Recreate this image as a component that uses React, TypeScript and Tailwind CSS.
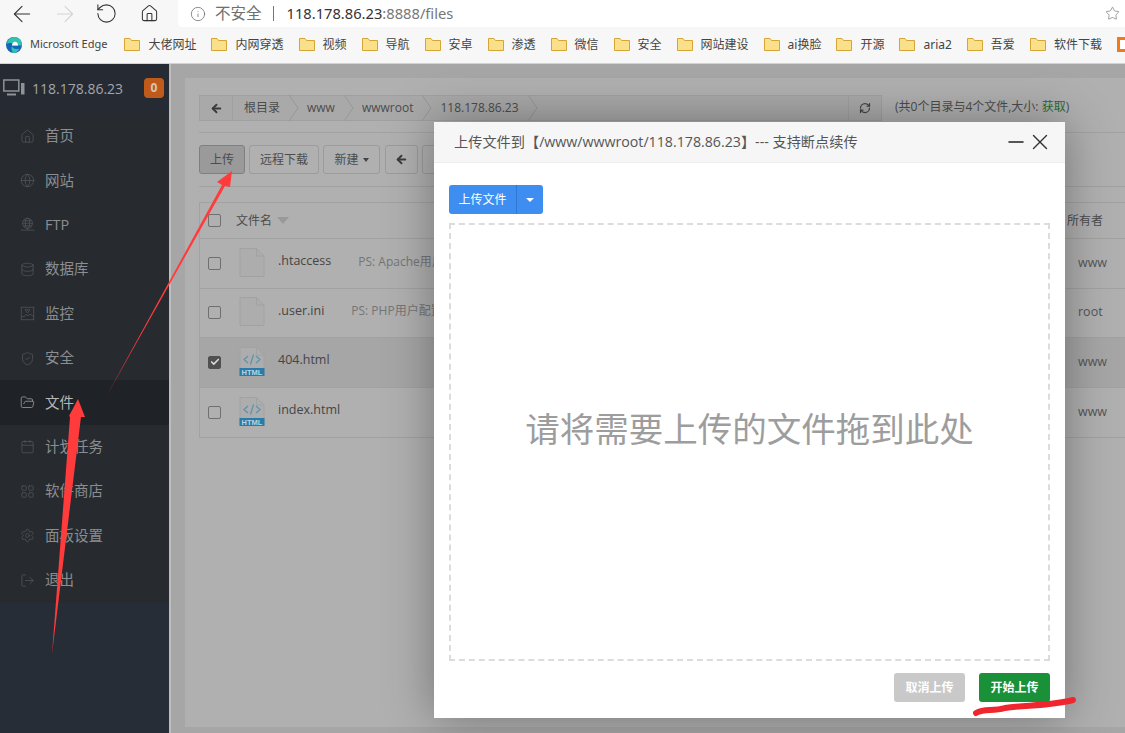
import { ArrowLeft, ArrowRight, Calendar, Check, Database, FolderOpen, Globe, Home, Info, LayoutGrid, LogOut, Minus, RefreshCw, RotateCw, Settings, ShieldCheck, Star, X } from "lucide-react";

function FtpIcon({ size, strokeWidth, className }: { size: number; strokeWidth: number; className: string }) {
  return (
    <svg width={size} height={size} viewBox="0 0 24 24" fill="none" stroke="currentColor" strokeWidth={strokeWidth} className={className}>
      <circle cx="12" cy="10" r="8" />
      <ellipse cx="12" cy="10" rx="3.500" ry="8" />
      <path d="M4 10h16M5 6h14M5 14h14M1 21h22M12 18v3" />
    </svg>
  );
}

function MonitorChartIcon({ size, strokeWidth, className }: { size: number; strokeWidth: number; className: string }) {
  return (
    <svg width={size} height={size} viewBox="0 0 24 24" fill="none" stroke="currentColor" strokeWidth={strokeWidth} className={className}>
      <rect x="2" y="2" width="20" height="20" />
      <path d="M2 17h5l3-4 3 3 3-3 6 4M8 6h8l-4 5z" />
    </svg>
  );
}

const BOOKMARKS = ["大佬网址", "内网穿透", "视频", "导航", "安卓", "渗透", "微信", "安全", "网站建设", "ai换脸", "开源", "aria2", "吾爱", "软件下载"];

const MENU = [
  { name: "首页", icon: Home },
  { name: "网站", icon: Globe },
  { name: "FTP", icon: FtpIcon },
  { name: "数据库", icon: Database },
  { name: "监控", icon: MonitorChartIcon },
  { name: "安全", icon: ShieldCheck },
  { name: "文件", icon: FolderOpen, active: true },
  { name: "计划任务", icon: Calendar },
  { name: "软件商店", icon: LayoutGrid },
  { name: "面板设置", icon: Settings },
  { name: "退出", icon: LogOut },
];

const CRUMBS = ["根目录", "www", "wwwroot", "118.178.86.23"];

const FILES = [
  { name: ".htaccess", ps: "PS: Apache用户配置", owner: "www" },
  { name: ".user.ini", ps: "PS: PHP用户配置文件", owner: "root" },
  { name: "404.html", html: true, checked: true, owner: "www" },
  { name: "index.html", html: true, owner: "www" },
];

function FolderIcon() {
  return (
    <svg width="16" height="13" viewBox="0 0 16 13" className="shrink-0">
      <path d="M.5 12.500V.5h5.500l1.500 2H15.500v10z" fill="#fbe08c" stroke="#d5a635" strokeWidth="1" />
    </svg>
  );
}

function EdgeLogo() {
  return (
    <svg width="16" height="16" viewBox="0 0 16 16" className="shrink-0">
      <circle cx="8" cy="8" r="8" fill="#1565b8" />
      <path d="M.5 7C1.500 3 4.500 0 8.500 0C13 0 16 3.500 16 8.500L6 8.500C6 11 9 13 13.500 11.500C12 14.500 9.500 16 7.500 16C5 14 4.500 9.500 8 6.500C5 5.500 2 6 .5 7Z" fill="#2fc3b0" />
      <path d="M6 8.500C6 6 7.500 4.800 9 4.800C10.800 4.800 12 6 12 8.500Z" fill="#fff" />
    </svg>
  );
}

function Chevron() {
  return (
    <svg width="11" height="26" viewBox="0 0 11 26" className="shrink-0">
      <path d="M1 0l9 13L1 26" fill="none" stroke="#979797" strokeWidth="1" />
    </svg>
  );
}

function FileIcon({ html }: { html?: boolean }) {
  return (
    <svg width="26" height="31" viewBox="0 0 26 31" className="shrink-0">
      <path d="M1 1.500h16.500L25 9v20.500H1z" fill="#adadad" stroke="#a2a2a2" strokeWidth="1" />
      <path d="M17.500 1.500V9H25" fill="none" stroke="#a2a2a2" strokeWidth="1" />
      {html && (
        <>
          <path d="M9 10l-4 3.500 4 3.500M17 10l4 3.500-4 3.500M14.500 8.500l-3 10" fill="none" stroke="#5f93ad" strokeWidth="1.300" />
          <rect x="0.500" y="22" width="25" height="8" fill="#2a7ba8" />
          <text x="13" y="29" textAnchor="middle" fontSize="7.500" fontWeight="700" fill="#b9d3e0" fontFamily="Liberation Sans, sans-serif">HTML</text>
        </>
      )}
    </svg>
  );
}

function Box({ checked }: { checked?: boolean }) {
  return (
    <span className={`w-[13px] h-[13px] rounded-[2px] border flex items-center justify-center shrink-0 ${checked ? "bg-[#505050] border-[#505050]" : "border-[#6f6f6f]"}`}>
      {checked && <Check size={10} strokeWidth={4} color="#d8d8d8" />}
    </span>
  );
}

export default function App() {
  return (
    <div className="w-[1125px] h-[733px] relative overflow-hidden flex flex-col bg-[#a6a6a6] font-['Open_Sans','Noto_Sans_CJK_SC',sans-serif]">
      {/* browser chrome */}
      <div className="h-[64px] bg-[#f7f7f7] border-b border-[#d2d2d2] shrink-0 flex flex-col">
        <div className="h-[27px] flex shrink-0">
          <div className="w-[178px] flex items-center text-[#333] shrink-0">
            <ArrowLeft size={26} strokeWidth={1} className="ml-[9px] shrink-0" />
            <ArrowRight size={26} strokeWidth={1} className="ml-[17px] text-[#d4d4d4] shrink-0" />
            <RotateCw size={23} strokeWidth={1.100} className="ml-[17px] -scale-x-100 shrink-0" />
            <Home size={19} strokeWidth={1.300} className="ml-[22px] shrink-0" />
          </div>
          <div className="flex-1 bg-white rounded-bl-[4px] flex items-center pl-[12px] font-['Noto_Sans','Noto_Sans_CJK_SC',sans-serif]">
            <Info size={16} strokeWidth={1.100} className="text-[#666]" />
            <span className="ml-[9px] text-[15.500px] text-[#6f6f6f]">不安全</span>
            <span className="ml-[11px] w-px h-[15px] bg-[#777]" />
            <span className="ml-[13px] text-[14.700px] text-[#333]">118.178.86.23<span className="text-[#777]">:8888/files</span></span>
            <Star size={15} strokeWidth={1} className="ml-auto mr-[5px] text-[#666]" />
          </div>
        </div>
        <div className="flex-1 flex items-center pl-[6px] pb-[1px] text-[12px] text-[#444] whitespace-nowrap font-['Noto_Sans','Noto_Sans_CJK_SC',sans-serif]">
          <EdgeLogo />
          <span className="ml-[8px] mr-[17px] text-[11px]">Microsoft Edge</span>
          <div className="flex items-center gap-[15px]">
            {BOOKMARKS.map((b) => (
              <div key={b} className="flex items-center gap-[8px]">
                <FolderIcon />
                <span>{b}</span>
              </div>
            ))}
            <span className="w-[16px] h-[15px] border-[3px] border-[#f07a1a] bg-white shrink-0" />
          </div>
        </div>
      </div>

      <div className="flex-1 flex min-h-0">
        {/* sidebar */}
        <aside className="w-[171px] shrink-0 bg-[#272d36] border-r-2 border-[#bdbdbd] flex flex-col">
          <div className="h-[50px] flex items-center pl-[3px] pb-[2px] bg-[#252a33]">
            <svg width="22" height="18" viewBox="0 0 22 18" fill="none" stroke="#8f9397" strokeWidth="1.500" className="shrink-0">
              <rect x=".8" y="1" width="15" height="11" />
              <path d="M4 15.500h9" strokeWidth="2" />
              <rect x="18" y="4" width="3.500" height="11.500" fill="#8f9397" stroke="none" />
            </svg>
            <span className="ml-[7px] text-[14px] text-[#a3a6a9]">118.178.86.23</span>
            <span className="ml-auto mr-[5px] w-[20px] h-[20px] rounded-[4px] bg-[#c05a1a] text-[#d8c4b4] text-[12px] font-bold flex items-center justify-center">0</span>
          </div>
          <nav className="bg-[#272b30] pb-[1px]">
            {MENU.map((m) => (
              <div key={m.name} className={`h-[44.400px] flex items-center pl-[20px] ${m.active ? "bg-[#1f2226]" : ""}`}>
                <m.icon size={15} strokeWidth={1.300} className={m.active ? "text-[#9a9da0]" : "text-[#4f5458]"} />
                <span className={`ml-[10px] text-[14.500px] ${m.active ? "text-[#b5b7b9]" : "text-[#8b8e91]"}`}>{m.name}</span>
              </div>
            ))}
          </nav>
        </aside>

        {/* main panel */}
        <main className="flex-1 min-w-0 pl-[14px] pt-[14px] pb-[6px]">
          <div className="h-full bg-[#b0b0b0] pl-[14px] text-[#4c4c4c] text-[12px]">
            <div className="h-[55px] border-b border-[#a2a2a2] flex items-start pt-[17px]">
              <div className="w-[650px] h-[26px] border border-[#a0a0a0] bg-[#a9a9a9] flex items-center shrink-0">
                <div className="w-[33px] h-full border-r border-[#a0a0a0] flex items-center justify-center mr-[3px]">
                  <ArrowLeft size={13} strokeWidth={3.500} className="text-[#3c3c3c]" />
                </div>
                {CRUMBS.map((c) => (
                  <div key={c} className="flex items-center h-full">
                    <span className="mx-[8px]">{c}</span>
                    <Chevron />
                  </div>
                ))}
              </div>
              <div className="w-[33px] h-[26px] border border-l-0 border-[#a0a0a0] bg-[#aaaaaa] flex items-center justify-center shrink-0">
                <RefreshCw size={12} strokeWidth={2.500} className="text-[#444]" />
              </div>
              <span className="ml-[13px] mt-[3px] whitespace-nowrap">(共0个目录与4个文件,大小: <span className="text-[#2c6b33]">获取</span>)</span>
            </div>

            <div className="h-[54px] border-b border-[#a2a2a2] flex items-start pt-[12px] gap-[4px]">
              <div className="w-[46px] h-[29px] rounded-[3px] border border-[#7f7f7f] bg-[#9a9a9a] flex items-center justify-center">上传</div>
              <div className="w-[70px] h-[29px] rounded-[3px] border border-[#9b9b9b] flex items-center justify-center">远程下载</div>
              <div className="w-[57px] h-[29px] rounded-[3px] border border-[#9b9b9b] flex items-center justify-center gap-[4px]">
                新建<span className="w-0 h-0 border-x-[3.500px] border-x-transparent border-t-[4px] border-t-[#444]" />
              </div>
              <div className="w-[33px] h-[29px] ml-[1px] rounded-[3px] border border-[#9b9b9b] flex items-center justify-center">
                <ArrowLeft size={13} strokeWidth={3.500} className="text-[#3c3c3c]" />
              </div>
              <div className="w-[33px] h-[29px] rounded-[3px] border border-[#9b9b9b]" />
            </div>

            <div className="mt-[15px] w-[940px] border border-[#a2a2a2]">
              <div className="h-[36px] border-b border-[#a2a2a2] flex items-center pl-[8px]">
                <Box />
                <span className="ml-[15px]">文件名</span>
                <span className="ml-[5px] w-0 h-0 border-x-[6px] border-x-transparent border-t-[7px] border-t-[#999]" />
                <span className="ml-auto mr-[35px]">所有者</span>
              </div>
              {FILES.map((f) => (
                <div key={f.name} className={`h-[49.500px] border-b last:border-b-0 border-[#a2a2a2] flex items-center pl-[8px] text-[13px] ${f.checked ? "bg-[#a6a6a6]" : ""}`}>
                  <Box checked={f.checked} />
                  <span className="ml-[18px] mb-[2px]"><FileIcon html={f.html} /></span>
                  <span className="ml-[13px] mb-[3px] text-[#454545] text-[12.500px]">{f.name}</span>
                  {f.ps && <span className="ml-[27px] mb-[3px] text-[#757575] text-[12px]">{f.ps}</span>}
                  <span className="ml-auto w-[60px] text-[#555] text-[12.500px]">{f.owner}</span>
                </div>
              ))}
            </div>
          </div>
        </main>
      </div>

      {/* upload dialog */}
      <div className="absolute left-[434px] top-[122px] w-[631px] h-[596px] bg-white shadow-[0_0_45px_rgba(0,0,0,0.35)] flex flex-col">
        <div className="h-[41px] bg-[#f6f6f6] border-b border-[#eeeeee] flex items-center pl-[20px] pr-[12px] pb-[1px] text-[14.200px] text-[#555] shrink-0">
          <span>上传文件到【/www/wwwroot/118.178.86.23】--- 支持断点续传</span>
          <Minus size={24} strokeWidth={1.500} className="ml-auto text-[#222]" />
          <X size={26} strokeWidth={1.300} className="-ml-px text-[#333]" />
        </div>
        <div className="flex-1 min-h-0 flex flex-col pl-[15px] pr-[15px] pt-[22px] pb-[15px]">
          <div className="flex h-[29px] w-[94px] rounded-[3px] bg-[#3d8ef0] text-white text-[12px] shrink-0">
            <span className="w-[68px] flex items-center justify-center border-r border-[#2f78d0]">上传文件</span>
            <span className="flex-1 flex items-center justify-center">
              <span className="w-0 h-0 border-x-[4px] border-x-transparent border-t-[4px] border-t-white" />
            </span>
          </div>
          <div className="mt-[9px] h-[438px] border-2 border-dashed border-[#dcdcdc] flex items-center justify-center shrink-0 text-[34.500px] text-[#9d9d9d] pb-[26px]">
            请将需要上传的文件拖到此处
          </div>
          <div className="mt-[12px] flex justify-end gap-[14px] text-[12px] font-bold text-white">
            <span className="w-[71px] h-[29px] rounded-[3px] bg-[#c9c9c9] flex items-center justify-center">取消上传</span>
            <span className="w-[71px] h-[29px] rounded-[3px] bg-[#1a9139] flex items-center justify-center">开始上传</span>
          </div>
        </div>
      </div>

      {/* hand-drawn red annotations */}
      <svg className="absolute inset-0 pointer-events-none" width="1125" height="733" viewBox="0 0 1125 733">
        <path d="M52 654L70 417L69 416L78 399L85 417L81 417Z" fill="#ff3b3b" />
        <path d="M106 397L222 185L217 182L232 171L230 187L225 186Z" fill="#ff3b3b" />
        <path d="M976 713C985 708 992 712 1005 708C1025 705 1050 706 1073 700" fill="none" stroke="#f0262e" strokeWidth="6" strokeLinecap="round" />
      </svg>
    </div>
  );
}
